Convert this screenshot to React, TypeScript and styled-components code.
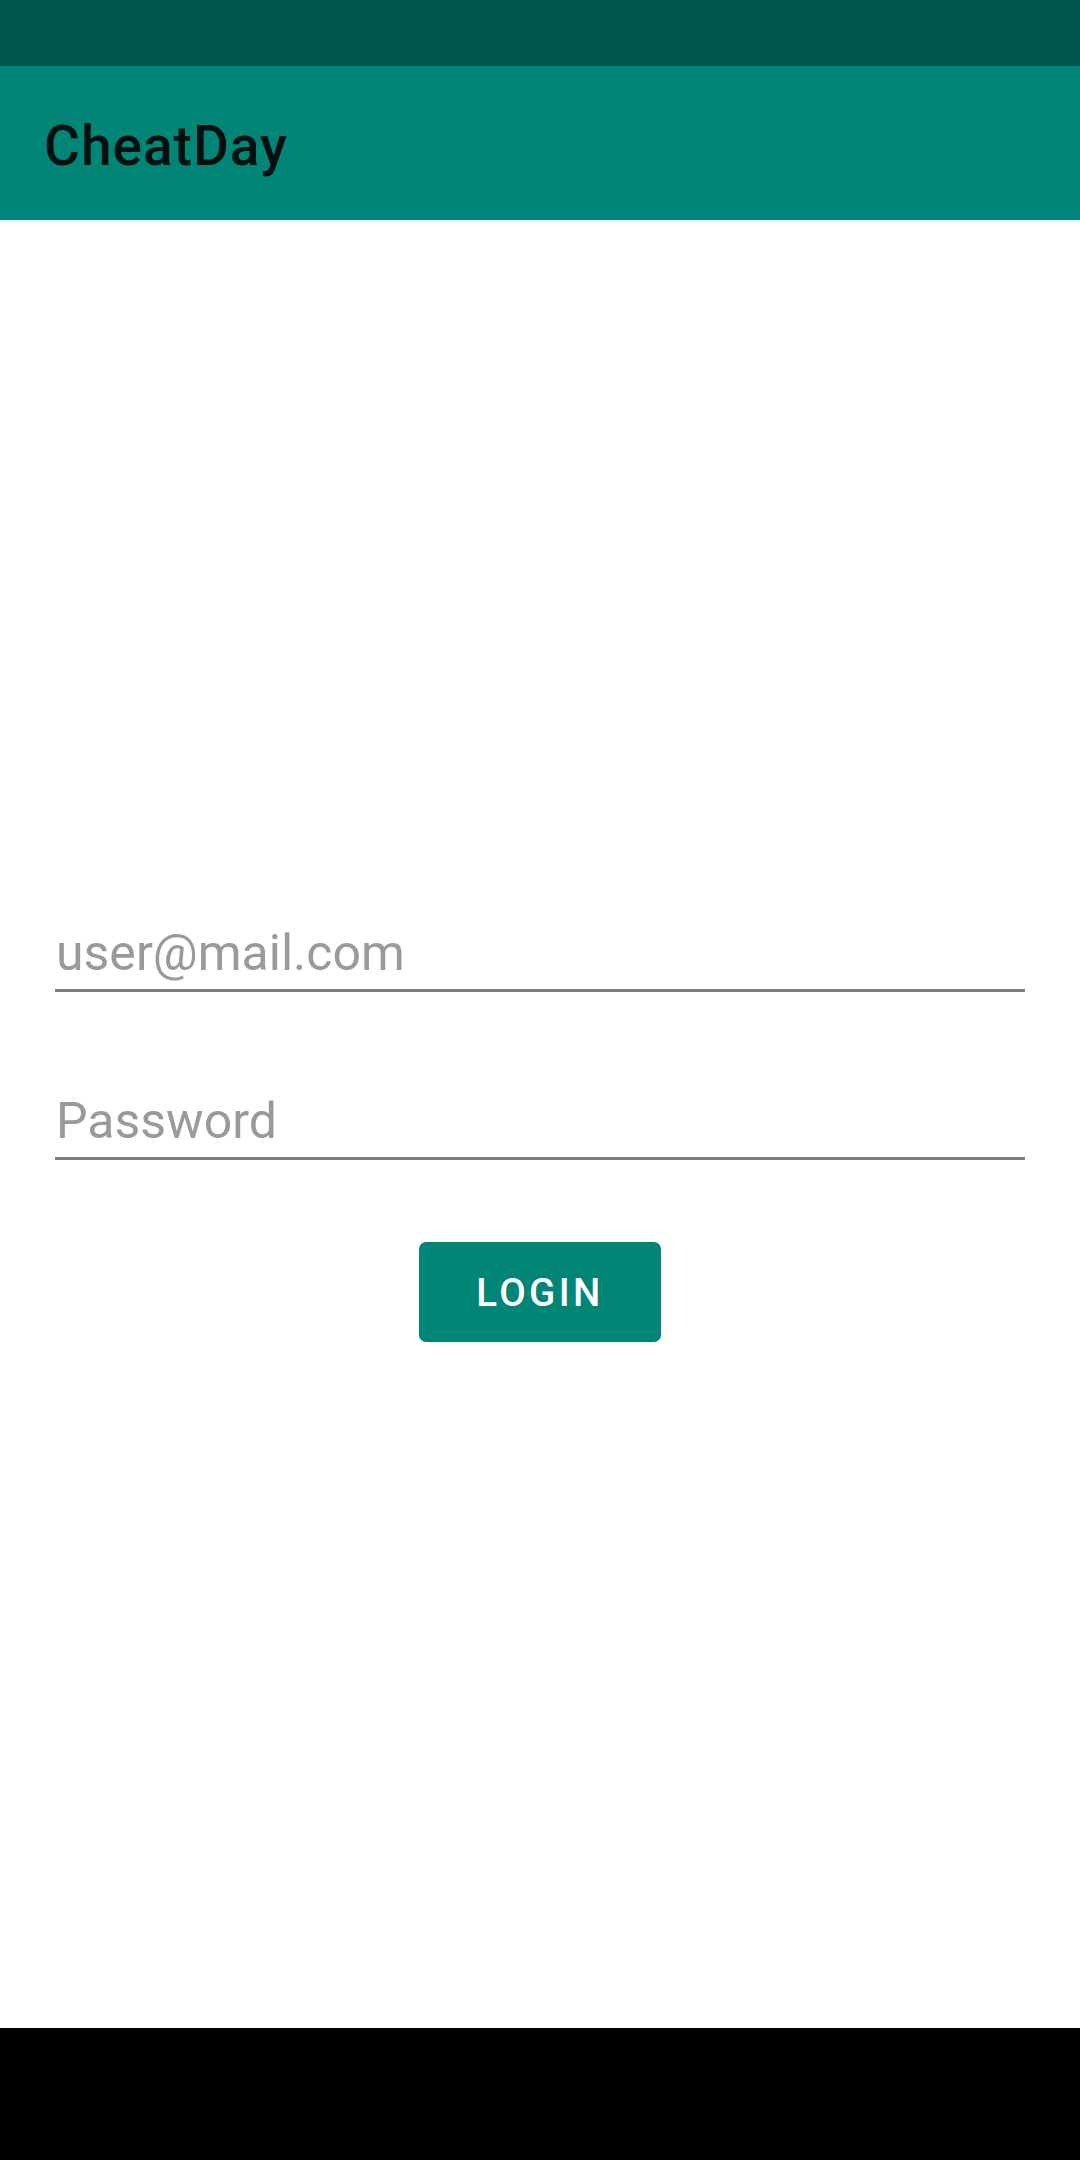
import React from "react";
import styled, { createGlobalStyle } from "styled-components";

const Global = createGlobalStyle`
  html, body { margin: 0; padding: 0; background: #ffffff; }
  body { font-family: Roboto, "Noto Sans", sans-serif; }
  * { box-sizing: border-box; }
`;

const Screen = styled.div`
  width: 1080px;
  height: 2160px;
  display: flex;
  flex-direction: column;
  background: #ffffff;
  overflow: hidden;
`;

const StatusBar = styled.div`
  height: 66px;
  flex: none;
  background: #00574b;
`;

const AppBar = styled.header`
  height: 154px;
  flex: none;
  background: #008577;
  display: flex;
  align-items: center;
  padding: 6px 0 0 44px;
`;

const Title = styled.h1`
  margin: 0;
  font-family: Roboto, sans-serif;
  font-weight: 500;
  font-size: 55px;
  letter-spacing: 1px;
  color: rgba(0, 0, 0, 0.88);
  line-height: 1;
`;

const Content = styled.main`
  flex: 1;
  display: flex;
  flex-direction: column;
  align-items: stretch;
  padding: 703px 55px 0;
`;

const Field = styled.input<{ $gap?: number }>`
  display: block;
  width: 100%;
  height: 69px;
  margin: 0 0 ${(p) => p.$gap ?? 0}px;
  padding: 0 0 6px 1px;
  border: none;
  border-bottom: 3px solid #7c7c7c;
  background: transparent;
  outline: none;
  font-family: Roboto, sans-serif;
  font-size: 50px;
  line-height: 60px;
  color: #212121;
  &::placeholder {
    color: #9a9a9a;
  }
`;

const Button = styled.button`
  align-self: center;
  width: 242px;
  height: 100px;
  border: none;
  border-radius: 7px;
  background: #008577;
  color: #ffffff;
  font-family: Roboto, sans-serif;
  font-weight: 500;
  font-size: 38.5px;
  letter-spacing: 3.4px;
  text-transform: uppercase;
  padding: 0;
  cursor: pointer;
`;

const NavBar = styled.div`
  height: 132px;
  flex: none;
  background: #000000;
`;

export default function App() {
  return (
    <>
      <Global />
      <Screen>
        <StatusBar />
        <AppBar>
          <Title>CheatDay</Title>
        </AppBar>
        <Content>
          <Field type="email" placeholder="user@mail.com" $gap={99} />
          <Field type="password" placeholder="Password" $gap={82} />
          <Button>Login</Button>
        </Content>
        <NavBar />
      </Screen>
    </>
  );
}
